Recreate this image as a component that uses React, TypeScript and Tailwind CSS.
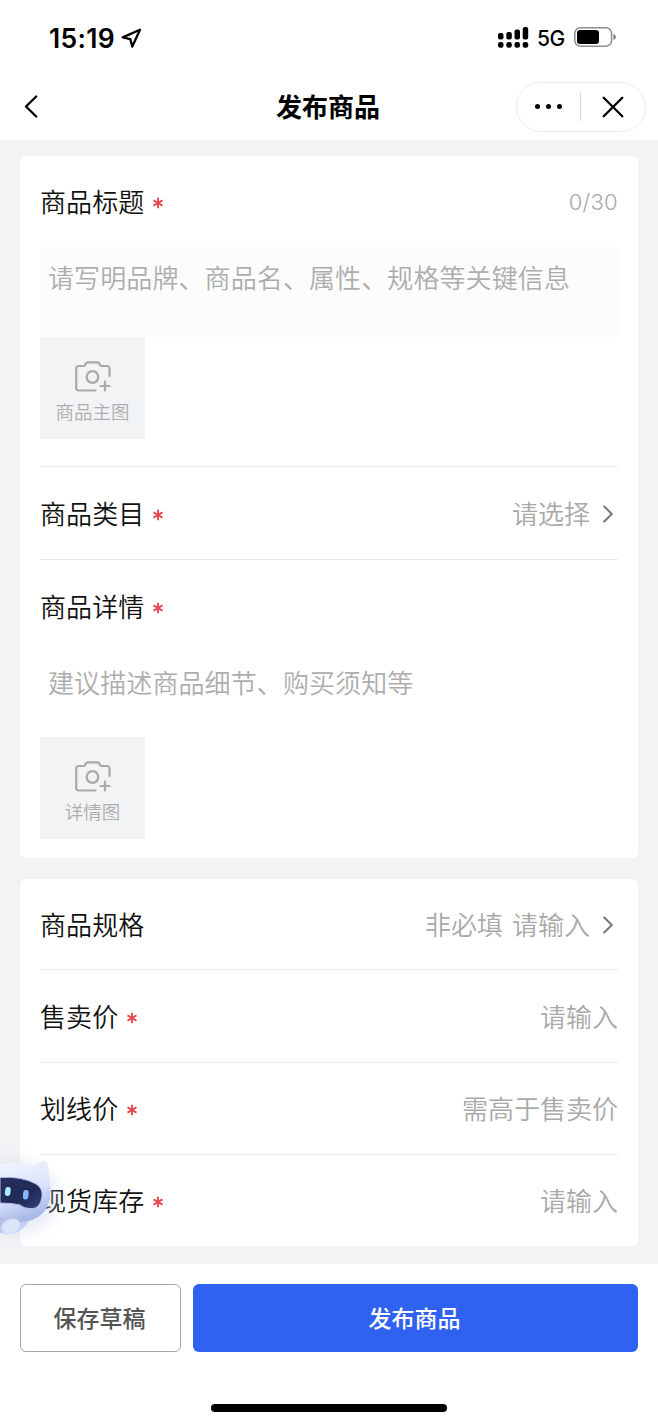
import type { ReactNode } from "react";

function StatusBar() {
  return (
    <div className="h-[74px] flex items-center justify-between pl-[49px] pr-[42px] font-[Inter,sans-serif]">
      <div className="flex items-center gap-[6px] pt-[2px]">
        <span className="text-[26.5px] leading-none font-semibold tracking-[0.3px] w-[66px] whitespace-nowrap">
          15:19
        </span>
        <svg width="21" height="21" viewBox="0 0 21 21" fill="none" stroke="#000" strokeWidth="2.3" strokeLinejoin="round">
          <path d="M19 1.700 1.700 9.400 9.300 11.200 11.300 18.600Z" />
        </svg>
      </div>
      <div className="flex items-center">
        <svg width="31" height="21" viewBox="0 0 31 21">
          <rect x="0" y="6" width="5.500" height="6.500" rx="2" />
          <rect x="8.300" y="5" width="5.500" height="7.500" rx="2" />
          <rect x="16.500" y="2.500" width="5.500" height="10" rx="2" />
          <rect x="24.700" y="0" width="5.500" height="12.500" rx="2" />
          <rect x="0" y="15" width="5.500" height="5.700" rx="2.200" />
          <rect x="8.300" y="15" width="5.500" height="5.700" rx="2.200" />
          <rect x="16.500" y="15" width="5.500" height="5.700" rx="2.200" />
          <rect x="24.700" y="15" width="5.500" height="5.700" rx="2.200" />
        </svg>
        <span className="ml-2 mt-[2px] w-[28px] text-[21px] leading-none font-medium tracking-[-0.5px]">5G</span>
        <svg className="ml-[9px]" width="42" height="20" viewBox="0 0 42 20">
          <rect x="0.800" y="0.800" width="36.800" height="18.400" rx="5.500" fill="none" stroke="#8c8c8c" strokeWidth="1.500" />
          <rect x="3" y="3" width="22" height="14" rx="3.200" />
          <path d="M39.500 7c3 1.200 3 4.800 0 6z" fill="#777" />
        </svg>
      </div>
    </div>
  );
}

function NavBar() {
  return (
    <div className="h-[66px] flex items-center justify-between pl-6 pr-[12px] pb-[1px]">
      <div className="w-[116px] flex items-center">
        <svg width="14" height="23" viewBox="0 0 14 23" fill="none" stroke="#000" strokeWidth="2.3" strokeLinecap="round" strokeLinejoin="round">
          <path d="M12.200 1.500 2 11.500 12.200 21.500" />
        </svg>
      </div>
      <h1 className="text-[26px] leading-none font-bold pb-[2px]">发布商品</h1>
      <div className="w-[130px] h-[50px] rounded-full border-[1.5px] border-[#ebebeb] flex items-center">
        <div className="flex-1 flex items-center justify-center gap-[6px]">
          <span className="size-[5px] rounded-full bg-black" />
          <span className="size-[5px] rounded-full bg-black" />
          <span className="size-[5px] rounded-full bg-black" />
        </div>
        <div className="w-px h-7 bg-[#d8d8d8]" />
        <div className="flex-1 flex justify-center">
          <svg width="22" height="22" viewBox="0 0 22 22" stroke="#000" strokeWidth="2.3" strokeLinecap="round">
            <path d="M1.700 1.700 20.300 20.300M20.300 1.700 1.700 20.300" />
          </svg>
        </div>
      </div>
    </div>
  );
}

function Label({ text, required }: { text: string; required?: boolean }) {
  return (
    <div className="flex items-center font-[350] text-[#111]">
      <span className="pb-[2px] tracking-[0.1px]">{text}</span>
      {required && (
        <svg className="ml-[9px] mt-[2px]" width="10" height="12" viewBox="0 0 10 12" stroke="#e5484d" strokeWidth="1.9">
          <path d="M5 .8v10.400M.5 3.400l9 5.200M9.500 3.400l-9 5.200" />
        </svg>
      )}
    </div>
  );
}

function Row({
  label,
  required,
  arrow,
  className,
  children,
}: {
  label: string;
  required?: boolean;
  arrow?: boolean;
  className: string;
  children: ReactNode;
}) {
  return (
    <div className={`flex items-center justify-between ${className}`}>
      <Label text={label} required={required} />
      <div className="flex items-center font-[350] text-[#a9a9a9]">
        <span className="pb-[2px]">{children}</span>
        {arrow && (
          <svg className="ml-[13px] mr-[5px]" width="10" height="18" viewBox="0 0 10 18" fill="none" stroke="#777" strokeWidth="2" strokeLinecap="round" strokeLinejoin="round">
            <path d="M1.200 1.500 8.800 9 1.200 16.500" />
          </svg>
        )}
      </div>
    </div>
  );
}

function Upload({ text }: { text: string }) {
  return (
    <div className="w-[105px] h-[102px] bg-[#f2f3f5] flex flex-col items-center pt-[24px]">
      <svg width="36" height="31" viewBox="0 0 36 31" fill="none" stroke="#a8a9ab" strokeWidth="2.2" strokeLinecap="round" strokeLinejoin="round">
        <path d="M20.500 29.500H3.500a2.300 2.300 0 0 1-2.300-2.300V7.300A2.300 2.300 0 0 1 3.500 5h5.800l1.800-2.700q.7-.9 1.800-.9h9.400q1.100 0 1.800.9L25.900 5h6.300a2.300 2.300 0 0 1 2.300 2.300V15" />
        <circle cx="17.500" cy="16" r="5.800" />
        <path d="M30 20.500v9M25.500 25h9" />
      </svg>
      <span className="mt-[9px] text-[18.5px] leading-[20px] font-[350] text-[#adaeb0]">{text}</span>
    </div>
  );
}

function Robot() {
  return (
    <svg className="absolute left-0 top-[1146px]" width="76" height="108" viewBox="0 0 76 108">
      <defs>
        <linearGradient id="head" x1="0" y1="0" x2="0.3" y2="1">
          <stop offset="0" stopColor="#f3f6ff" />
          <stop offset="0.600" stopColor="#dbe3fd" />
          <stop offset="1" stopColor="#a9b9e8" />
        </linearGradient>
        <linearGradient id="face" x1="0" y1="0" x2="1" y2="1">
          <stop offset="0" stopColor="#27315c" />
          <stop offset="0.600" stopColor="#202a55" />
          <stop offset="1" stopColor="#35427e" />
        </linearGradient>
        <linearGradient id="body" x1="0" y1="0" x2="0.5" y2="1">
          <stop offset="0" stopColor="#9dafe0" />
          <stop offset="1" stopColor="#cfdaf7" />
        </linearGradient>
        <filter id="glow" x="-50%" y="-50%" width="200%" height="200%">
          <feGaussianBlur stdDeviation="7" />
        </filter>
      </defs>
      <ellipse cx="15" cy="52" rx="44" ry="38" fill="#c5cfe8" opacity="0.35" filter="url(#glow)" />
      <path d="M0 60H35Q30 80 16 87Q8 89 0 87Z" fill="url(#body)" />
      <path d="M0 18Q18 15 35 20Q39 15 45 15Q49 16 49 30Q54 54 43 67Q34 76 20 76Q8 75 0 71Z" fill="url(#head)" />
      <path d="M0 31.500Q22 30 36 38Q43 42 42 51Q40 62 33 62.500Q25 63 20 59Q13 57 0 57Z" fill="url(#face)" stroke="#afbdf0" strokeWidth="1" />
      <rect x="5" y="41" width="5.500" height="9" rx="2.700" fill="#a7ecff" transform="rotate(6 8 46)" />
      <rect x="23" y="44" width="5.500" height="9.500" rx="2.700" fill="#82b9fc" transform="rotate(6 26 49)" />
      <ellipse cx="11" cy="80" rx="9.500" ry="7" fill="#dce4fa" transform="rotate(-25 11 80)" />
    </svg>
  );
}

export default function App() {
  return (
    <div className="relative w-[658px] h-[1424px] overflow-hidden bg-white text-black text-[26px] leading-[36px] font-['Noto_Sans_CJK_SC',sans-serif]">
      <header className="h-[140px]">
        <StatusBar />
        <NavBar />
      </header>

      <main className="h-[1124px] bg-[#f2f3f5] px-5 pt-4 flex flex-col gap-[21px]">
        {/* Basic info */}
        <section className="h-[702px] rounded-md bg-white px-5">
          <div className="h-[311px] border-b border-[#ebebeb]">
            <div className="h-[91px] flex items-center justify-between">
              <Label text="商品标题" required />
              <span className="font-[Inter,sans-serif] font-light text-[22px] tracking-[0.3px] text-[#a8a8a8]">0/30</span>
            </div>
            <div className="h-[90px] bg-[#fcfcfc] px-2 pt-[12px] font-[350] tracking-[0.1px] text-[#adadad]">
              请写明品牌、商品名、属性、规格等关键信息
            </div>
            <Upload text="商品主图" />
          </div>
          <Row label="商品类目" required arrow className="h-[93px] border-b border-[#ebebeb] pt-[1px]">
            请选择
          </Row>
          <div className="h-[93px] flex items-center">
            <Label text="商品详情" required />
          </div>
          <div className="h-[84px] px-2 pt-[11px] font-[350] tracking-[0.1px] text-[#adadad]">建议描述商品细节、购买须知等</div>
          <Upload text="详情图" />
        </section>

        {/* Specs, price and stock */}
        <section className="h-[367px] rounded-md bg-white px-5">
          <Row label="商品规格" arrow className="h-[91px] border-b border-[#ebebeb] pt-[1px]">
            <span className="mr-[9px]">非必填</span>请输入
          </Row>
          <Row label="售卖价" required className="h-[93px] border-b border-[#ebebeb] pt-[1px]">
            请输入
          </Row>
          <Row label="划线价" required className="h-[92px] border-b border-[#ebebeb]">
            需高于售卖价
          </Row>
          <Row label="现货库存" required className="h-[91px]">
            请输入
          </Row>
        </section>
      </main>

      <footer className="h-[160px] bg-white px-5 pt-5">
        <div className="flex gap-3 text-[23px] font-medium">
          <button className="w-[161px] h-[68px] rounded-md border border-[#a6a6a6] pb-[2px] pr-[2px] text-[#555]">保存草稿</button>
          <button className="flex-1 h-[68px] rounded-md bg-[#2f62f0] pb-[2px] pr-[2px] text-white">发布商品</button>
        </div>
        <div className="mx-auto mt-[52px] w-[236px] h-2 rounded-full bg-black" />
      </footer>

      <Robot />
    </div>
  );
}
